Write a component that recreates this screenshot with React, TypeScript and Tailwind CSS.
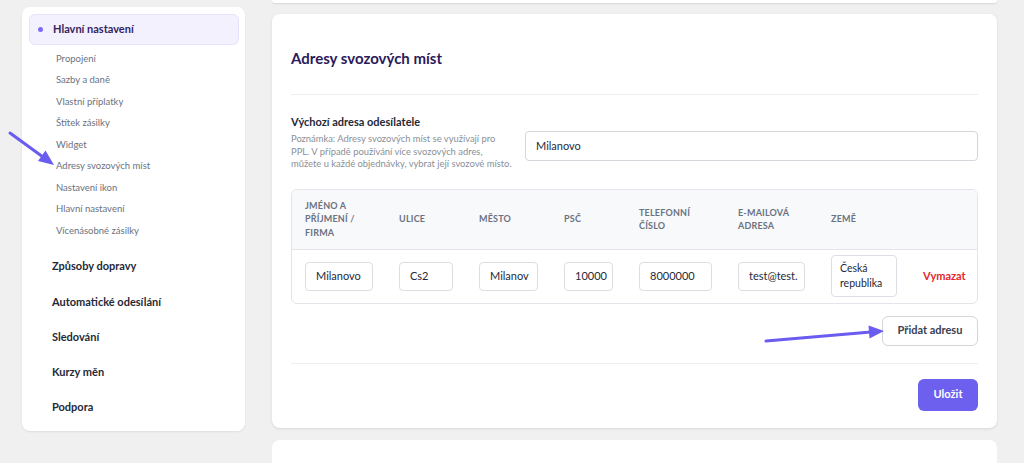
import React from "react";

const subItems = [
  "Propojení",
  "Sazby a daně",
  "Vlastní příplatky",
  "Štítek zásilky",
  "Widget",
  "Adresy svozových míst",
  "Nastavení ikon",
  "Hlavní nastavení",
  "Vícenásobné zásilky",
];

const mainItems = ["Způsoby dopravy", "Automatické odesílání", "Sledování", "Kurzy měn", "Podpora"];

const cols = [
  { label: ["JMÉNO A", "PŘÍJMENÍ /", "FIRMA"], w: "w-[94px]", value: "Milanovo" },
  { label: ["ULICE"], w: "w-[80px]", value: "Cs2" },
  { label: ["MĚSTO"], w: "w-[85px]", value: "Milanov" },
  { label: ["PSČ"], w: "w-[75px]", value: "10000" },
  { label: ["TELEFONNÍ", "ČÍSLO"], w: "w-[99px]", value: "8000000" },
  { label: ["E-MAILOVÁ", "ADRESA"], w: "w-[93px]", value: "test@test." },
];

export default function App() {
  return (
    <div className="relative w-[1024px] h-[463px] overflow-hidden bg-[#f0f0f1] font-['Lato',sans-serif]">
      <div className="flex pl-[22px] pr-[27px] gap-[27px]">
        {/* Sidebar */}
        <aside className="w-[223px] h-[424px] mt-[7px] bg-white rounded-lg shadow-[0_1px_2px_rgba(0,0,0,0.08)] p-[7px]">
          <div className="h-[31px] w-[210px] rounded-md bg-[#f4f1fe] border border-[#e7e1fb] flex items-center pl-[8px]">
            <span className="w-[5px] h-[5px] rounded-full bg-[#7b6cf0]" />
            <span className="ml-[10px] text-[11px] font-bold text-[#33245f]">Hlavní nastavení</span>
          </div>
          <ul className="mt-[3px] pl-[27px]">
            {subItems.map((s) => (
              <li key={s} className="h-[21.5px] flex items-center text-[9.5px] text-[#6b7280]">
                {s}
              </li>
            ))}
          </ul>
          <ul className="mt-[7.5px] pl-[23px]">
            {mainItems.map((s) => (
              <li key={s} className="h-[35.25px] flex items-center text-[11px] font-bold text-[#1f2937]">
                {s}
              </li>
            ))}
          </ul>
        </aside>

        {/* Main column */}
        <main className="w-[725px] flex flex-col">
          <div className="h-[3px] bg-white rounded-b-lg shadow-[0_1px_2px_rgba(0,0,0,0.1)]" />
          <section className="mt-[11px] h-[414px] bg-white rounded-lg shadow-[0_1px_3px_rgba(0,0,0,0.1)] px-[19px] pt-[34px]">
            <div className="pb-[26px] border-b border-[#eeeef0]">
              <h1 className="text-[15px] leading-[20px] font-bold text-[#2b1a5a]">Adresy svozových míst</h1>
            </div>

            <div className="flex gap-[20px] mt-[19px]">
              <div className="w-[214px]">
                <div className="text-[11px] leading-[16px] font-bold text-[#1f2937]">Výchozí adresa odesílatele</div>
                <p className="mt-[3px] text-[9.4px] leading-[12.5px] text-[#8a8f98] whitespace-nowrap">
                  Poznámka: Adresy svozových míst se využívají pro
                  <br />
                  PPL. V případě používání více svozových adres,
                  <br />
                  můžete u každé objednávky, vybrat její svozové místo.
                </p>
              </div>
              <div className="flex-1 mt-[17px] h-[30px] rounded border border-[#d4d6dc] flex items-center px-[10px] text-[11px] text-[#1f2937]">
                Milanovo
              </div>
            </div>

            <div className="mt-[18px] rounded-md border border-[#e3e5ea] overflow-hidden">
              <div className="h-[60px] bg-[#f8f9fb] flex items-center border-b border-[#e3e5ea]">
                {cols.map((c, i) => (
                  <div key={i} className={`${c.w} px-[13px] text-[9px] leading-[13.5px] font-bold tracking-[0.2px] text-[#6b7280]`}>
                    {c.label.map((l) => (
                      <div key={l}>{l}</div>
                    ))}
                  </div>
                ))}
                <div className="w-[92px] px-[13px] text-[9px] leading-[13.5px] font-bold tracking-[0.2px] text-[#6b7280]">ZEMĚ</div>
              </div>
              <div className="h-[53px] flex items-center">
                {cols.map((c, i) => (
                  <div key={i} className={`${c.w} px-[13px]`}>
                    <div className="h-[29px] w-full rounded border border-[#dcdee3] flex items-center px-[10px] text-[11px] text-[#1f2937] whitespace-nowrap overflow-hidden">
                      {c.value}
                    </div>
                  </div>
                ))}
                <div className="w-[92px] px-[13px]">
                  <div className="h-[42px] w-full rounded border border-[#dcdee3] flex flex-col justify-center px-[8px] text-[10.5px] leading-[15px] text-[#1f2937]">
                    <span>Česká</span>
                    <span>republika</span>
                  </div>
                </div>
                <div className="pl-[13px] text-[11px] font-bold text-[#e5262d]">Vymazat</div>
              </div>
            </div>

            <div className="flex justify-end mt-[12px]">
              <button className="h-[30px] w-[96px] rounded-md border border-[#d4d6dc] bg-white text-[11px] font-bold text-[#374151]">
                Přidat adresu
              </button>
            </div>
            <div className="mt-[17px] border-t border-[#eeeef0]" />
            <div className="flex justify-end mt-[15px]">
              <button className="h-[32px] w-[60px] rounded-md bg-[#6d60ef] text-[11px] font-bold text-white">
                Uložit
              </button>
            </div>
          </section>
          <div className="mt-[12px] h-[40px] bg-white rounded-t-lg" />
        </main>
      </div>

      {/* Annotation arrows */}
      <svg className="absolute inset-0 pointer-events-none" width="1024" height="463" viewBox="0 0 1024 463">
        <line x1="10" y1="133" x2="43" y2="157" stroke="#6a5cf0" strokeWidth="3" strokeLinecap="round" />
        <polygon points="54,165 38,161 45.5,150.5" fill="#6a5cf0" />
        <line x1="766" y1="341" x2="871" y2="332" stroke="#6a5cf0" strokeWidth="3" strokeLinecap="round" />
        <polygon points="884,331 869.5,338.5 868.5,325.5" fill="#6a5cf0" />
      </svg>
    </div>
  );
}
